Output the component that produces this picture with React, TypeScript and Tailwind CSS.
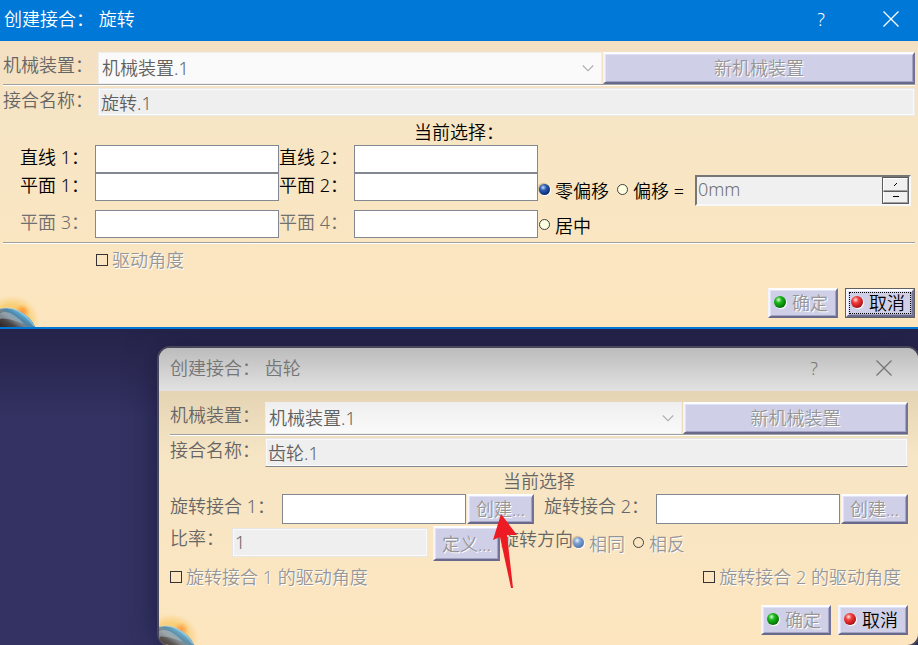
import React from 'react'
import clsx from 'clsx'

interface MechanismRowsProps {
  id: string
  mechanism: string
  name: string
  buttonClass: string
  faded?: boolean
}

function TitleBar({ title, faded = false }: { title: string; faded?: boolean }) {
  return (
    <header
      className={clsx(
        'flex items-center justify-between',
        faded
          ? 'h-[43px] rounded-t-[11px] bg-linear-to-b from-[#bcbcbc] to-[#e2e2e2] pb-[3px] pl-[11px] pr-[7px] text-[#757575]'
          : 'h-[41px] bg-[#0078d7] pl-1 pb-[3px] text-white'
      )}
    >
      <h1 className="whitespace-pre">{title}</h1>
      <div className="flex gap-4">
        <button type="button" className="w-[54px] text-center">?</button>
        <button type="button" className="flex w-[54px] items-center justify-center">
          <svg width="16" height="16" viewBox="0 0 16 16" fill="none" stroke="currentColor" strokeWidth="1.3">
            <path d="M0.5 0.5 15.5 15.5M15.5 0.5 0.5 15.5" />
          </svg>
        </button>
      </div>
    </header>
  )
}

function BevelButton({ className, children }: { className?: string; children: React.ReactNode }) {
  return (
    <button
      type="button"
      className={clsx(
        'shrink-0 border-2 border-t-[#fdfdff] border-l-[#f4f4ff] border-r-[#73739a] border-b-[#69698c] bg-[#cfcfe7] text-center shadow-[inset_1px_1px_0_#e2e2f6,inset_-1px_-1px_0_#a3a3c3]',
        className
      )}
    >
      {children}
    </button>
  )
}

function Etched({ children }: { children: React.ReactNode }) {
  return <span className="text-[#969696] [text-shadow:1px_1px_0_#fff]">{children}</span>
}

function Ball({ color }: { color: 'green' | 'red' }) {
  return (
    <span
      className={clsx(
        'mb-[3px] size-3 shrink-0 rounded-full shadow-[1px_1px_1px_#fff]',
        color === 'green'
          ? 'bg-[radial-gradient(circle_at_38%_32%,#d8ffd0_0%,#1db61d_28%,#068006_65%,#023c02_100%)]'
          : 'bg-[radial-gradient(circle_at_38%_32%,#ffe4dc_0%,#f04040_28%,#c01818_65%,#3c0606_100%)]'
      )}
    />
  )
}

function Divider() {
  return <hr className="h-[2px] border-0 border-t border-t-[#a0a0a0] bg-white" />
}

function MechanismRows({ id, mechanism, name, buttonClass, faded = false }: MechanismRowsProps) {
  return (
    <>
      <div className="flex items-start">
        <label htmlFor={`${id}-mechanism`} className="w-[95px] shrink-0 leading-[26px] text-[#666666]">机械装置：</label>
        <div className="relative flex-1">
          <select
            id={`${id}-mechanism`}
            disabled
            className={clsx(
              'block h-8 w-full appearance-none border border-[#eeeeee] pl-[3px] text-[#606060] opacity-100',
              faded ? 'bg-linear-to-b from-[#efefef] to-[#fafafa]' : 'bg-[#fafafa]'
            )}
          >
            <option>{mechanism}</option>
          </select>
          <svg className="absolute right-2 top-[13px]" width="12" height="8" viewBox="0 0 12 8" fill="none" stroke="#b0b0b0" strokeWidth="1.1">
            <path d="M0.8 0.5 6 5.7 11.2 0.5" />
          </svg>
        </div>
        <BevelButton className={clsx('ml-px h-8', buttonClass)}>
          <Etched>新机械装置</Etched>
        </BevelButton>
      </div>
      <Divider />
      <div className="flex items-start pt-[2px]">
        <label htmlFor={`${id}-name`} className="w-[95px] shrink-0 leading-6 text-[#666666]">接合名称：</label>
        <input
          id={`${id}-name`}
          type="text"
          readOnly
          defaultValue={name}
          className={clsx(
            'min-w-0 flex-1 border bg-[#efefef] pb-px pl-[2px] text-[#606060] shadow-[inset_0_0_0_1px_#fafafa]',
            faded ? 'h-[29px] border-[#e6e6e6] border-b-[#828790]' : 'h-7 border-[#ebebeb]'
          )}
        />
      </div>
    </>
  )
}

function PickField({ id, label, className, dim = false }: { id: string; label: string; className?: string; dim?: boolean }) {
  return (
    <>
      <label htmlFor={id} className={clsx('whitespace-nowrap leading-6', dim && 'text-[#707070]', className)}>{label}</label>
      <input id={id} type="text" className="h-7 w-full border border-[#828790] bg-white px-1" />
    </>
  )
}

function Radio({ name, label, checked = false, faded = false }: { name: string; label: string; checked?: boolean; faded?: boolean }) {
  return (
    <label className="flex shrink-0 items-center gap-[5px]">
      <input
        type="radio"
        name={name}
        defaultChecked={checked}
        className={clsx(
          'mb-[3px] size-[11px] appearance-none rounded-full border border-[#404040]',
          !faded && 'bg-[#ffffe1]',
          'checked:border-0 checked:shadow-[1px_1px_1px_#fff,-1px_-1px_1px_#c8b48c]',
          faded
            ? 'checked:bg-[radial-gradient(circle_at_38%_32%,#e8f2ff_0%,#7ea2d4_30%,#5377ad_75%,#3f5c8c_100%)]'
            : 'checked:bg-[radial-gradient(circle_at_38%_32%,#c8dcff_0%,#2c5cae_30%,#0c2f78_70%,#04123c_100%)]'
        )}
      />
      {faded ? <Etched>{label}</Etched> : <span>{label}</span>}
    </label>
  )
}

function Tick({ label }: { label: string }) {
  return (
    <label className="flex items-center gap-1 leading-6">
      <input type="checkbox" className="size-3 appearance-none border border-[#333333]" />
      <Etched>{label}</Etched>
    </label>
  )
}

function Footer({ focused = false }: { focused?: boolean }) {
  return (
    <footer className="mt-4 flex justify-end">
      <BevelButton className="flex h-[30px] w-[70px] items-center gap-1.5 pl-1">
        <Ball color="green" />
        <Etched>确定</Etched>
      </BevelButton>
      <div className={clsx('ml-[7px] h-[30px] w-[70px]', focused && 'border border-[#606060]')}>
        <BevelButton className={clsx('relative flex h-full w-full items-center gap-1.5', focused ? 'pl-[3px]' : 'pl-1')}>
          <Ball color="red" />
          <span className="whitespace-nowrap text-black">取消</span>
          {focused && <span className="absolute inset-px border border-dotted border-black" />}
        </BevelButton>
      </div>
    </footer>
  )
}

// Decoration in the lower left corner of every dialog
function Planet({ id, faded = false }: { id: string; faded?: boolean }) {
  return (
    <svg
      className={clsx('absolute bottom-0 left-0', faded && 'rounded-bl-[10px] opacity-90')}
      width="46"
      height="36"
      viewBox="0 0 46 36"
    >
      <defs>
        <radialGradient id={`${id}-glow`}>
          <stop offset="0" stopColor="#fbc25e" />
          <stop offset="0.6" stopColor="#f9cf78" />
          <stop offset="0.8" stopColor="#fad896" stopOpacity="0.7" />
          <stop offset="1" stopColor="#fde6bf" stopOpacity="0" />
        </radialGradient>
        <radialGradient id={`${id}-spark`}>
          <stop offset="0" stopColor="#ff9436" />
          <stop offset="0.5" stopColor="#ffa548" stopOpacity="0.8" />
          <stop offset="1" stopColor="#fbbd55" stopOpacity="0" />
        </radialGradient>
        <linearGradient id={`${id}-body`} gradientUnits="userSpaceOnUse" x1="26" y1="16" x2="10" y2="40">
          <stop offset="0.1" stopColor="#a8daec" />
          <stop offset="0.3" stopColor="#5aa8cf" />
          <stop offset="0.45" stopColor="#4c86a8" />
          <stop offset="0.6" stopColor="#78828a" />
          <stop offset="0.78" stopColor="#4a4648" />
          <stop offset="1" stopColor="#332c2c" />
        </linearGradient>
      </defs>
      <ellipse cx="12" cy="29" rx="29" ry="26" fill={`url(#${id}-glow)`} />
      <circle cx="22" cy="21" r="8" fill={`url(#${id}-spark)`} />
      <circle cx="6" cy="49" r="32" fill={`url(#${id}-body)`} />
      <path d="M0 18Q9 15 18 20T34 35" fill="none" stroke="#c6e2e8" strokeWidth="1.2" opacity="0.5" />
      <path d="M0 22Q7 19 14 24T24 33Q14 29 8 28T0 28Z" fill="#a9bcc6" opacity="0.55" />
    </svg>
  )
}

function RevoluteDialog() {
  return (
    <section className="relative border-b-2 border-[#0078d7] bg-linear-to-b from-[#f2dcc0] via-[#f6e5c5] via-35% to-[#fde6bf]">
      <TitleBar title="创建接合： 旋转" />
      <div className="relative px-[3px] pt-[11px] pb-[9px]">
        <Planet id="revolute" />
        <MechanismRows id="revolute" mechanism="机械装置.1" name="旋转.1" buttonClass="w-[312px]" />
        <p className="pt-1 pb-px text-center leading-6">当前选择：</p>
        <div className="grid grid-cols-[92px_184px_75px_184px_minmax(0,1fr)] grid-rows-[28px_37px_28px] items-start">
          <PickField id="line1" label="直线 1：" className="pl-[17px]" />
          <PickField id="line2" label="直线 2：" />
          <span />
          <PickField id="plane1" label="平面 1：" className="pl-[17px]" />
          <PickField id="plane2" label="平面 2：" />
          <div className="flex items-center pt-[2px] pl-px pr-1">
            <Radio name="offset" label="零偏移" checked />
            <div className="ml-2">
              <Radio name="offset" label="偏移 =" />
            </div>
            <div className="ml-[11px] flex h-[31px] min-w-0 flex-1 border-2 border-t-[#767676] border-l-[#767676] border-r-[#f8f8f8] border-b-[#f8f8f8] bg-[#f0f0f0]">
              <input type="text" defaultValue="0mm" readOnly className="min-w-0 flex-1 pl-px pb-1 text-[#707070]" />
              <div className="flex w-[27px] shrink-0 flex-col border border-[#5a5a5a]">
                <button type="button" className="flex flex-1 items-center justify-center border border-t-white border-l-white border-r-[#a0a0a0] border-b-[#a0a0a0]">
                  <svg width="5" height="5" viewBox="0 0 5 5" stroke="#000000">
                    <path d="M1 4 4 1" />
                  </svg>
                </button>
                <button type="button" className="flex flex-1 items-center justify-center border border-t-[#5a5a5a] border-l-white border-r-[#a0a0a0] border-b-[#a0a0a0]">
                  <svg width="6" height="5" viewBox="0 0 6 5" stroke="#000000">
                    <path d="M0 2.5H6" />
                  </svg>
                </button>
              </div>
            </div>
          </div>
          <PickField id="plane3" label="平面 3：" className="pl-[17px]" dim />
          <PickField id="plane4" label="平面 4：" dim />
          <div className="pt-1 pl-px">
            <Radio name="offset" label="居中" />
          </div>
        </div>
        <div className="pt-1">
          <Divider />
        </div>
        <div className="pt-1 pl-[93px]">
          <Tick label="驱动角度" />
        </div>
        <Footer focused />
      </div>
    </section>
  )
}

function JointField({ id, label, children }: { id: string; label: string; children?: React.ReactNode }) {
  return (
    <div className="flex items-start">
      <label htmlFor={id} className="w-28 shrink-0 leading-6">{label}</label>
      <input id={id} type="text" className="h-[30px] w-[184px] border border-[#828790] bg-white px-1" />
      <div className="relative ml-px">
        <BevelButton className="block h-[30px] w-[67px]">
          <Etched>创建...</Etched>
        </BevelButton>
        {children}
      </div>
    </div>
  )
}

function Pointer() {
  return (
    <svg className="absolute left-[25px] top-5 z-10" width="27" height="76" viewBox="0 0 27 76" fill="#ed1c24">
      <path d="M9 0 25 21 15 21 21 74 19 74 8 23 1 26Z" />
    </svg>
  )
}

function GearDialog() {
  return (
    <section className="mt-[19px] ml-[159px] rounded-[11px] bg-linear-to-b from-[#d8c8a8] via-[#f6e5c5] via-35% to-[#fde6bf] text-[#666666] shadow-[0_0_0_2px_#47465c,0_0_32px_#1c1a3c]">
      <TitleBar title="创建接合： 齿轮" faded />
      <div className="relative pt-[11px] pr-[10px] pb-[10px] pl-[11px]">
        <Planet id="gear" faded />
        <MechanismRows id="gear" mechanism="机械装置.1" name="齿轮.1" buttonClass="w-[225px]" faded />
        <p className="pt-[2px] pb-px text-center leading-6">当前选择</p>
        <div className="flex justify-between">
          <JointField id="joint1" label="旋转接合 1：">
            <Pointer />
          </JointField>
          <JointField id="joint2" label="旋转接合 2：" />
        </div>
        <div className="flex items-start pt-[2px]">
          <label htmlFor="ratio" className="w-[62px] shrink-0 leading-6">比率：</label>
          <input
            id="ratio"
            type="text"
            readOnly
            defaultValue="1"
            className="mt-[2px] h-[29px] w-[196px] border border-[#e6e6e6] bg-[#efefef] pb-px pl-[2px] shadow-[inset_0_0_0_1px_#fafafa]"
          />
          <BevelButton className="ml-[5px] h-[35px] w-[67px]">
            <Etched>定义...</Etched>
          </BevelButton>
          <span className="ml-px leading-[26px]">旋转方向</span>
          <div className="flex h-[35px] items-center gap-2">
            <Radio name="direction" label="相同" checked faded />
            <Radio name="direction" label="相反" faded />
          </div>
        </div>
        <div className="flex justify-between pt-1 pr-[7px]">
          <Tick label="旋转接合 1 的驱动角度" />
          <Tick label="旋转接合 2 的驱动角度" />
        </div>
        <Footer />
      </div>
    </section>
  )
}

export default function App() {
  return (
    <main className="min-h-screen overflow-hidden bg-linear-to-b from-[#242247] from-50% to-[#333262] to-65% font-['Noto_Sans','Noto_Sans_CJK_SC',sans-serif] text-lg/6 font-[350] text-black">
      <RevoluteDialog />
      <GearDialog />
    </main>
  )
}
